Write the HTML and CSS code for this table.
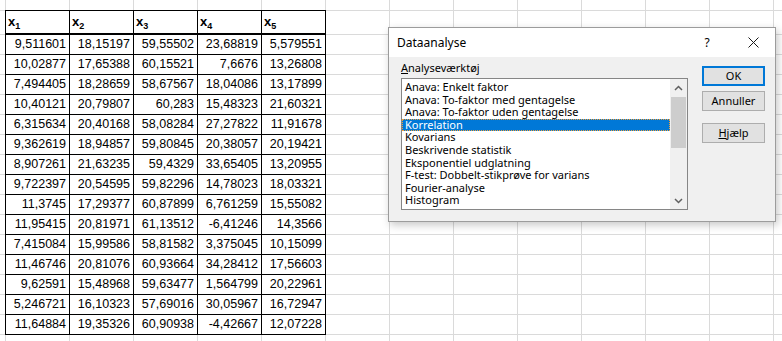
FILE: index.html
```html
<!DOCTYPE html>
<html lang="da">
<head>
<meta charset="utf-8">
<title>Dataanalyse</title>
<link rel="stylesheet" href="styles.css">
</head>
<body>
<div class="sheet">
  <table class="data">
    <thead>
      <tr class="hdr"><th>x<sub>1</sub></th><th>x<sub>2</sub></th><th>x<sub>3</sub></th><th>x<sub>4</sub></th><th>x<sub>5</sub></th></tr>
    </thead>
    <tbody>
      <tr><td>9,511601</td><td>18,15197</td><td>59,55502</td><td>23,68819</td><td>5,579551</td></tr>
      <tr><td>10,02877</td><td>17,65388</td><td>60,15521</td><td>7,6676</td><td>13,26808</td></tr>
      <tr><td>7,494405</td><td>18,28659</td><td>58,67567</td><td>18,04086</td><td>13,17899</td></tr>
      <tr><td>10,40121</td><td>20,79807</td><td>60,283</td><td>15,48323</td><td>21,60321</td></tr>
      <tr><td>6,315634</td><td>20,40168</td><td>58,08284</td><td>27,27822</td><td>11,91678</td></tr>
      <tr><td>9,362619</td><td>18,94857</td><td>59,80845</td><td>20,38057</td><td>20,19421</td></tr>
      <tr><td>8,907261</td><td>21,63235</td><td>59,4329</td><td>33,65405</td><td>13,20955</td></tr>
      <tr><td>9,722397</td><td>20,54595</td><td>59,82296</td><td>14,78023</td><td>18,03321</td></tr>
      <tr><td>11,3745</td><td>17,29377</td><td>60,87899</td><td>6,761259</td><td>15,55082</td></tr>
      <tr><td>11,95415</td><td>20,81971</td><td>61,13512</td><td>-6,41246</td><td>14,3566</td></tr>
      <tr><td>7,415084</td><td>15,99586</td><td>58,81582</td><td>3,375045</td><td>10,15099</td></tr>
      <tr><td>11,46746</td><td>20,81076</td><td>60,93664</td><td>34,28412</td><td>17,56603</td></tr>
      <tr><td>9,62591</td><td>15,48968</td><td>59,63477</td><td>1,564799</td><td>20,22961</td></tr>
      <tr><td>5,246721</td><td>16,10323</td><td>57,69016</td><td>30,05967</td><td>16,72947</td></tr>
      <tr><td>11,64884</td><td>19,35326</td><td>60,90938</td><td>-4,42667</td><td>12,07228</td></tr>
    </tbody>
  </table>

  <div class="dialog">
    <div class="titlebar">
      <span class="title">Dataanalyse</span>
      <span class="help">?</span>
      <span class="close"><svg width="11" height="11" viewBox="0 0 11 11"><path d="M0.5 0.5 L10.5 10.5 M10.5 0.5 L0.5 10.5" stroke="#1a1a1a" stroke-width="1" fill="none"/></svg></span>
    </div>
    <div class="dbody">
      <div class="left">
        <div class="label"><u>A</u>nalyseværktøj</div>
        <div class="listbox">
          <ul class="items">
            <li>Anava: Enkelt faktor</li>
            <li>Anava: To-faktor med gentagelse</li>
            <li>Anava: To-faktor uden gentagelse</li>
            <li class="sel">Korrelation</li>
            <li>Kovarians</li>
            <li>Beskrivende statistik</li>
            <li>Eksponentiel udglatning</li>
            <li>F-test: Dobbelt-stikprøve for varians</li>
            <li>Fourier-analyse</li>
            <li>Histogram</li>
          </ul>
          <div class="scrollbar">
            <div class="sb-btn"><svg width="9" height="6" viewBox="0 0 9 6"><path d="M1 5 L4.5 1.5 L8 5" fill="none" stroke="#606060" stroke-width="1.5"/></svg></div>
            <div class="sb-track"><div class="sb-thumb"></div></div>
            <div class="sb-btn"><svg width="9" height="6" viewBox="0 0 9 6"><path d="M1 1 L4.5 4.5 L8 1" fill="none" stroke="#606060" stroke-width="1.5"/></svg></div>
          </div>
        </div>
      </div>
      <div class="buttons">
        <button class="btn default">OK</button>
        <button class="btn">Annuller</button>
        <button class="btn spaced"><u>H</u>jælp</button>
      </div>
    </div>
  </div>
</div>
</body>
</html>
```

FILE: styles.css
```css
html, body {
  margin: 0;
  padding: 0;
  background: #fff;
}

body {
  font-family: "Liberation Sans", Arial, sans-serif;
  color: #000;
}

.sheet {
  position: relative;
  width: 782px;
  height: 341px;
  overflow: hidden;
  box-sizing: border-box;
  padding: 10px 0 0 5px;
  background:
    linear-gradient(#dadada, #dadada) 0 10px / 100% 1px no-repeat,
    repeating-linear-gradient(to bottom, #dadada 0 1px, transparent 1px 20px) 0 34px / 100% 320px no-repeat,
    linear-gradient(to right, #dadada 0 1px, transparent 1px 64px) 5px 0 / 64px 100% repeat-x,
    #fff;
}

/* spreadsheet table */
.data {
  border-collapse: separate;
  border-spacing: 0;
  table-layout: fixed;
  width: 321px;
  border-left: 1px solid #000;
  border-top: 1px solid #000;
  background: #fff;
  font-size: 12.5px;
}

.data th,
.data td {
  width: 64px;
  box-sizing: border-box;
  border-right: 1px solid #000;
  border-bottom: 1px solid #000;
  white-space: nowrap;
  overflow: hidden;
}

.data .hdr {
  height: 24px;
}

.data th {
  text-align: left;
  vertical-align: bottom;
  border-bottom-width: 2px;
  padding: 0 0 4px 2px;
  font-weight: bold;
  font-size: 13px;
  line-height: 14px;
}

.data th sub {
  font-size: 9px;
  line-height: 0;
  vertical-align: -3px;
}

.data tbody tr {
  height: 20px;
}

.data td {
  text-align: right;
  padding: 0 3px 0 0;
  line-height: 19px;
}

/* dialog */
.dialog {
  position: absolute;
  left: 388px;
  top: 27px;
  width: 388px;
  height: 195px;
  box-sizing: border-box;
  border: 1px solid #9c9c9c;
  background: #f0f0f0;
  box-shadow: 2px 3px 8px rgba(0, 0, 0, 0.22);
  font-family: "Noto Sans", "Open Sans", sans-serif;
  color: #000;
  display: flex;
  flex-direction: column;
}

.titlebar {
  height: 29px;
  flex: none;
  background: #fff;
  display: flex;
  align-items: center;
  font-size: 12px;
}

.title {
  flex: 1;
  padding-left: 8px;
}

.help {
  width: 16px;
  text-align: center;
  margin-right: 16px;
}

.close {
  width: 44px;
  display: flex;
  justify-content: center;
  align-items: center;
}

.dbody {
  flex: 1;
  display: flex;
  gap: 14px;
  padding: 0 10px 0 12px;
}

.left {
  width: 287px;
}

.label {
  font-size: 11px;
  line-height: 15px;
  margin: 3px 0 3px 0;
}

.listbox {
  height: 132px;
  box-sizing: border-box;
  border: 1px solid #868686;
  background: #fff;
  display: flex;
}

.items {
  list-style: none;
  margin: 0;
  padding: 2px 0 0 0;
  flex: 1;
  font-size: 11px;
  line-height: 12.6px;
  overflow: hidden;
}

.items li {
  height: 12.6px;
  padding-left: 3px;
  white-space: nowrap;
}

.items li.sel {
  background: #0078d7;
  color: #fff;
  outline: 1px dotted #f2a03a;
  outline-offset: -1px;
}

.scrollbar {
  width: 17px;
  flex: none;
  background: #f0f0f0;
  display: flex;
  flex-direction: column;
}

.sb-btn {
  height: 17px;
  display: flex;
  align-items: center;
  justify-content: center;
}

.sb-track {
  flex: 1;
}

.sb-thumb {
  height: 51px;
  margin: 1px 1px 0 1px;
  background: #cdcdcd;
}

.buttons {
  display: flex;
  flex-direction: column;
  padding-top: 9px;
  width: 63px;
}

.btn {
  height: 20px;
  width: 63px;
  box-sizing: border-box;
  border: 1px solid #adadad;
  background: #e1e1e1;
  font-family: "Noto Sans", "Open Sans", sans-serif;
  font-size: 11px;
  line-height: 16px;
  padding: 0;
  color: #000;
  margin: 0;
}

.btn.default {
  border: 2px solid #0078d7;
}

.btn + .btn {
  margin-top: 5px;
}

.btn.spaced {
  margin-top: 12px;
}
```
